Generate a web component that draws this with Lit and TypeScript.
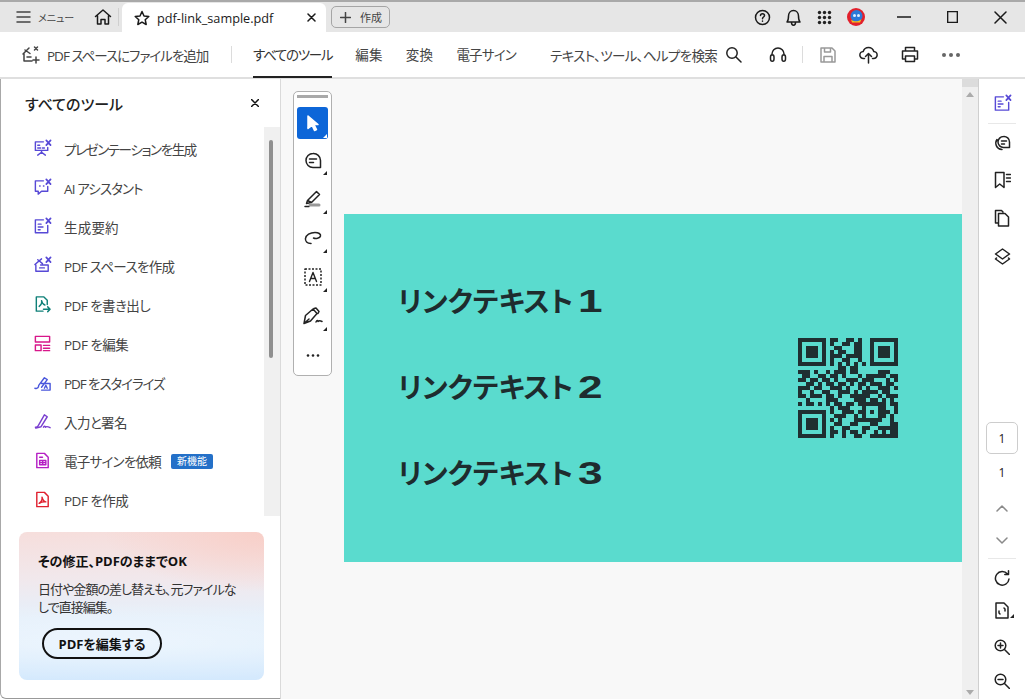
import { LitElement, html, svg, css } from 'lit';
import { customElement } from 'lit/decorators.js';

// QR modules, 25x25
const QR_ROWS = [
  '1111111 0 110011010 0 1111111',
  '1000001 0 100110110 0 1000001',
  '1011101 0 011000110 0 1011101',
  '1011101 0 101100110 0 1011101',
  '1011101 0 111011110 0 1011101',
  '1000001 0 100110010 0 1000001',
  '1111111 0 101010101 0 1111111',
  '0000000 0 001101100 0 0000000',
  '1110100 1 011101100 0 0011100',
  '0110011 0 110100010 1 1111011',
  '1101101 1 010011101 1 1000101',
  '0011010 1 101101011 0 1110110',
  '1110110 0 111010010 1 0011101',
  '1001001 1 001110101 1 1101100',
  '1101110 1 101001111 1 0010111',
  '0010000 1 110000111 0 1101010',
  '1011010 1 011011011 1 1111011',
  '0000000 0 101110001 0 0011001',
  '1111111 0 100111011 0 1011101',
  '1000001 0 011100101 0 0011010',
  '1011101 0 101000111 1 1110010',
  '1011101 0 011001100 0 1100011',
  '1011101 0 100110001 1 0011111',
  '1000001 0 110101101 0 0101011',
  '1111111 0 100100110 0 1111111',
].map((r) => r.replace(/ /g, ''));

const qrPath = QR_ROWS.map((row, y) =>
  [...row].map((c, x) => (c === '1' ? `M${x} ${y}h1v1h-1z` : '')).join('')
).join('');

const sparkle = svg`<path d="M14 1.500l4.500 5M18.500 1.500l-4.500 5" stroke-width="1.800"/>`;

// ls: カナが詰まった書体に幅を合わせるための字間
const tools = [
  { label: 'プレゼンテーションを生成', ls: -1.4, color: '#5749d6', icon: svg`<path d="M11 3H2.500v9h13V9M9 12v2M5 17l4-3 4 3M5 6.500h2M5 9.500h3M10 9.500h2"/>${sparkle}` },
  { label: 'AI アシスタント', ls: -0.9, color: '#5749d6', icon: svg`<path d="M11 3H2.500v11h3v3l3.500-3h6.500V9M7 8.500h.5M11 8.500h.5"/>${sparkle}` },
  { label: '生成要約', ls: 0.2, color: '#5749d6', icon: svg`<path d="M11 3H2.500v13.500h13V9M5.500 7.500h3M5.500 10.500h5M5.500 13.500h2"/>${sparkle}` },
  { label: 'PDF スペースを作成', ls: -0.65, color: '#5749d6', icon: svg`<path d="M2 9l7-6M5 4l5 4M3 9.500V16h13V9.500H8M7 12.500h5"/>${sparkle}` },
  { label: 'PDF を書き出し', ls: -0.55, color: '#0f8078', icon: svg`<path d="M15 10V5.500L11.500 2H3.500v15h7M6.500 12c2-1.500 3-4 2.500-6 .5 2.500 2 4 3.500 4.500M11 15h7M15.500 12.500L18 15l-2.500 2.500"/>` },
  { label: 'PDF を編集', ls: -0.5, color: '#d8178a', icon: svg`<path d="M2.500 2.500h15v6h-15zM2.500 11.500h6v6h-6zM11 12h6.500M11 15h6.500M11 17.500h6.500"/>` },
  { label: 'PDF をスタイライズ', ls: -1.1, color: '#4a57dc', icon: svg`<path d="M2 16c3 1 4-1 4-3l6-8 3 2-6 8M9 11h9v7H9M12 16l1.500-3 1.500 3"/>` },
  { label: '入力と署名', ls: -0.6, color: '#7a3fd0', icon: svg`<path d="M2.500 16c2 .5 3-1 3.500-2.500L12 3l3 2-6.500 10.500L3 17M11 16c1-1.500 2-1.500 2 0 1-1 2-1 5 .5"/>` },
  { label: '電子サインを依頼', ls: -0.75, color: '#b51fc4', badge: '新機能', icon: svg`<path d="M4 2.500h8l4 4V17.500H4zM7 6.500h3M7 10h6.500v4.500H7zM10.200 10v4.500M7 12.200h6.500"/>` },
  { label: 'PDF を作成', ls: -0.5, color: '#e0202f', icon: svg`<path d="M4 2.500h8l4 4V17.500H4zM6.500 14c2-1.500 3.500-4 3-6.500.5 2.500 2 4.500 4 5-2-.2-4.500 0-7 1.500z"/>` },
];

const links = ['1', '2', '3'];

@customElement('app-root')
export class AppRoot extends LitElement {
  static styles = css`
    :host {
      display: block;
      width: 1025px;
      height: 699px;
      overflow: hidden;
      position: relative;
      background: #fff;
      color: #333;
      font-family: 'Open Sans', 'Noto Sans CJK JP', sans-serif;
      font-feature-settings: 'palt';
    }
    svg {
      display: block;
      flex: none;
      fill: none;
      stroke: currentColor;
      stroke-width: 1.5;
      stroke-linecap: round;
      stroke-linejoin: round;
    }

    /* タブバー */
    .tabbar {
      height: 32px;
      box-sizing: border-box;
      border-top: 2px solid #a9a9a9;
      background: #e6e6e6;
      display: flex;
      align-items: center;
      color: #1a1a1a;
    }
    .menu {
      display: flex;
      align-items: center;
      gap: 7px;
      padding-left: 16px;
      width: 78px;
      font-size: 10px;
      color: #444;
    }
    .home {
      margin-right: 6px;
    }
    .tabsep {
      width: 1px;
      height: 18px;
      background: #cfcfcf;
      margin-right: 3px;
    }
    .tab {
      align-self: flex-end;
      width: 204px;
      height: 29px;
      box-sizing: border-box;
      background: #fff;
      border-radius: 6px 6px 0 0;
      display: flex;
      align-items: center;
      padding: 0 10px 0 12px;
      font-size: 12.7px;
    }
    .tab span {
      margin-left: 7px;
      flex: 1;
    }
    .create {
      margin-left: 5px;
      width: 59px;
      height: 22px;
      box-sizing: border-box;
      border: 1px solid #a5a5a5;
      border-radius: 5px;
      display: flex;
      align-items: center;
      gap: 9px;
      padding-left: 8px;
      font-size: 11px;
      color: #444;
    }
    .tab-right {
      margin-left: auto;
      padding-right: 1px;
      display: flex;
      align-items: center;
    }
    .tab-right .u {
      width: 31px;
      display: flex;
      justify-content: center;
    }
    .tab-right .w {
      width: 48px;
      display: flex;
      justify-content: center;
    }
    .tab-right .gap {
      width: 9px;
    }

    /* ツールバー */
    .toolbar {
      height: 47px;
      box-sizing: border-box;
      border-bottom: 2px solid #dfdfdf;
      display: flex;
      align-items: stretch;
      font-size: 13.5px;
      color: #444;
      white-space: nowrap;
    }
    .add {
      display: flex;
      align-items: center;
      gap: 7px;
      padding-left: 21px;
      width: 231px;
      box-sizing: border-box;
      color: #444;
      letter-spacing: -1px;
    }
    .vsep {
      align-self: center;
      width: 1px;
      height: 17px;
      background: #dcdcdc;
      flex: none;
    }
    .tabs {
      display: flex;
      gap: 23px;
      margin-left: 21px;
    }
    .tabs div {
      display: flex;
      align-items: center;
      border-bottom: 2px solid transparent;
      margin-bottom: -1px;
      letter-spacing: 0.3px;
    }
    .tabs .on {
      border-bottom-color: #222;
      color: #333;
      letter-spacing: -1.3px;
    }
    .tabs .sign {
      letter-spacing: -0.8px;
    }
    .search {
      margin-left: 34px;
      display: flex;
      align-items: center;
      gap: 8px;
      color: #444;
      letter-spacing: -0.65px;
    }
    .actions {
      display: flex;
      align-items: center;
      color: #222;
      margin-left: 15px;
    }
    .actions .a {
      width: 41px;
      display: flex;
      justify-content: center;
    }
    .actions .vsep {
      margin: 0 4px;
    }
    .actions .off {
      color: #999;
    }

    /* 本体 */
    .body {
      display: flex;
      height: 620px;
    }
    .panel {
      width: 281px;
      box-sizing: border-box;
      border-left: 1px solid #a8a8a8;
      border-right: 1px solid #dadada;
      border-bottom: 1px solid #999;
      border-bottom-left-radius: 6px;
      display: flex;
      flex-direction: column;
      background: #fff;
    }
    .panel-head {
      height: 48px;
      flex: none;
      display: flex;
      align-items: center;
      justify-content: space-between;
      padding: 0 21px 0 24px;
      font-size: 15px;
      font-weight: 500;
      color: #222;
    }
    .list-wrap {
      height: 389px;
      flex: none;
      display: flex;
    }
    .list {
      flex: 1;
      padding-top: 3px;
    }
    .tool {
      height: 39px;
      display: flex;
      align-items: center;
      padding-left: 32px;
      font-size: 13.5px;
      color: #444;
    }
    .tool svg {
      margin-right: 12px;
      margin-top: -3px;
    }
    .tool .name {
      margin-top: -1px;
    }
    .badge {
      margin-left: 10px;
      background: #2470c8;
      color: #fff;
      font-size: 10px;
      line-height: 15px;
      padding: 0 6px;
      border-radius: 2px;
    }
    .track {
      width: 16px;
      background: #f0f0f0;
      padding: 13px 0 0 5px;
      box-sizing: border-box;
    }
    .thumb {
      width: 4px;
      height: 218px;
      border-radius: 2px;
      background: #8f8f8f;
    }
    .promo {
      margin: 16px 0 0 18px;
      width: 245px;
      height: 148px;
      box-sizing: border-box;
      border-radius: 8px;
      padding: 19px 0 0 19px;
      background: radial-gradient(ellipse 300px 40px at 40% 74%, rgba(255, 255, 255, 0.35) 0, rgba(255, 255, 255, 0) 100%),
        radial-gradient(ellipse 160px 60px at 100% 0, #f8cfc8 0, rgba(248, 207, 200, 0) 100%),
        linear-gradient(180deg, #f6dedc 0, #f1e8ec 32%, #e5f0fb 58%, #e2f0fd 78%, #d4e9fd 100%);
      color: #333;
    }
    .promo h3 {
      margin: 0;
      font-size: 13px;
      line-height: 20px;
      font-weight: 700;
      color: #111;
    }
    .promo p {
      margin: 9px 0 0;
      font-size: 13px;
      line-height: 18px;
      letter-spacing: -0.95px;
      white-space: nowrap;
    }
    .promo button {
      margin: 12px 0 0 4px;
      width: 120px;
      height: 31px;
      box-sizing: border-box;
      border: 2px solid #111;
      border-radius: 16px;
      background: transparent;
      font: inherit;
      font-feature-settings: inherit;
      font-size: 13px;
      font-weight: 700;
      color: #111;
      padding: 0;
    }

    .viewer {
      flex: 1;
      position: relative;
      background: #f8f8f8;
      padding: 135px 0 0 63px;
      box-sizing: border-box;
    }
    .sheet {
      width: 618px;
      height: 348px;
      box-sizing: border-box;
      background: #5adbce;
      color: #1e2c2e;
      padding: 67px 64px 0 54px;
      display: flex;
      justify-content: space-between;
    }
    .links {
      display: flex;
      flex-direction: column;
      gap: 45px;
      font-size: 28px;
      line-height: 41px;
      font-weight: 700;
      white-space: nowrap;
    }
    .digit {
      display: inline-block;
      margin-left: 5px;
      font-family: 'Liberation Sans', sans-serif;
      font-size: 32px;
      line-height: 41px;
      vertical-align: top;
      transform: scaleX(1.38);
      transform-origin: 0 50%;
    }
    .qr {
      margin-top: 57px;
      width: 100px;
      height: 100px;
      fill: #1f2f31;
      stroke: none;
    }
    .vbar {
      width: 16px;
      flex: none;
      background: #efefef;
      position: relative;
    }
    .vbar .top {
      height: 8px;
      background: #dcdcdc;
    }
    .arrow {
      width: 0;
      height: 0;
      margin: 5px auto 0;
      border: 4px solid transparent;
      border-top: 0;
      border-bottom: 5px solid #ababab;
    }
    .arrow.down {
      position: absolute;
      left: 4px;
      bottom: 4px;
      margin: 0;
      border-bottom: 0;
      border-top: 5px solid #ababab;
    }
    .palette {
      position: absolute;
      left: 12px;
      top: 12px;
      width: 39px;
      height: 285px;
      box-sizing: border-box;
      background: #fff;
      border: 1px solid #b0b0b0;
      border-radius: 5px;
      padding: 3px;
      display: flex;
      flex-direction: column;
      align-items: center;
      color: #222;
    }
    .grip {
      width: 31px;
      height: 3px;
      background: #a9a9a9;
      flex: none;
      margin-bottom: 9px;
    }
    .pbtn {
      width: 31px;
      height: 32px;
      flex: none;
      position: relative;
      display: flex;
      align-items: center;
      justify-content: center;
      margin-bottom: 7px;
    }
    .pbtn.on {
      background: #0d66d8;
      border-radius: 3px;
      color: #fff;
      margin-bottom: 5px;
    }
    .pbtn::after {
      content: '';
      position: absolute;
      right: 1px;
      bottom: 1px;
      border: 2.5px solid transparent;
      border-right-color: currentColor;
      border-bottom-color: currentColor;
    }
    .pbtn.plain::after {
      display: none;
    }

    .rail {
      flex: 1;
      border-left: 1px solid #cfcfcf;
      display: flex;
      flex-direction: column;
      align-items: center;
      padding-top: 14px;
      color: #222;
    }
    .rail .r {
      height: 38px;
      display: flex;
      align-items: center;
      flex: none;
      position: relative;
    }
    .rail .ai {
      height: 20px;
      color: #5749d6;
      margin-bottom: 8px;
    }
    .rail .first {
      height: 36px;
    }
    .rail .rot {
      height: 36px;
    }
    .rail .fit {
      height: 28px;
    }
    .rail .zin {
      height: 46px;
    }
    .rail .zout {
      height: 22px;
    }
    .hsep {
      width: 28px;
      height: 1px;
      background: #e8e8e8;
      flex: none;
      margin: 2px 0 1px;
    }
    .pagebox {
      margin-top: 147px;
      width: 32px;
      height: 32px;
      box-sizing: border-box;
      border: 1px solid #cdcdcd;
      border-radius: 5px;
      display: flex;
      align-items: center;
      justify-content: center;
      font-size: 12px;
      flex: none;
    }
    .pagenum {
      font-size: 12px;
      height: 38px;
      line-height: 38px;
      flex: none;
    }
    .chev {
      height: 32px;
      display: flex;
      align-items: center;
      color: #8a8a8a;
      flex: none;
    }
    .corner::after {
      content: '';
      position: absolute;
      right: -5px;
      bottom: 6px;
      border: 2.5px solid transparent;
      border-right-color: currentColor;
      border-bottom-color: currentColor;
    }
  `;

  private renderTabBar() {
    return html`
      <div class="tabbar">
        <div class="menu">
          <svg width="15" height="14" viewBox="0 0 15 14"><path d="M1 2h13M1 7h13M1 12h13"/></svg>
          <span>メニュー</span>
        </div>
        <svg class="home" width="18" height="18" viewBox="0 0 18 18"><path d="M1.500 8.500L9 2l7.500 6.500M3.500 7.500V16h3.500v-4.500h4V16h3.500V7.500"/></svg>
        <div class="tabsep"></div>
        <div class="tab">
          <svg width="16" height="16" viewBox="0 0 16 16" stroke-width="1.200"><path d="M8 1.500l2 4.500 4.800.5-3.600 3.200 1 4.800L8 12.100l-4.200 2.400 1-4.800L1.200 6.500 6 6z"/></svg>
          <span>pdf-link_sample.pdf</span>
          <svg width="9" height="9" viewBox="0 0 9 9"><path d="M1 1l7 7M8 1l-7 7"/></svg>
        </div>
        <div class="create">
          <svg width="11" height="11" viewBox="0 0 11 11"><path d="M5.500 .5v10M.5 5.500h10"/></svg>
          <span>作成</span>
        </div>
        <div class="tab-right">
          <div class="u"><svg width="17" height="17" viewBox="0 0 17 17" stroke-width="1.300"><circle cx="8.500" cy="8.500" r="7"/><path d="M6.500 6.500c0-2.500 4-2.500 4 0 0 1.500-2 1.500-2 3.200M8.500 12v.3"/></svg></div>
          <div class="u"><svg width="17" height="19" viewBox="0 0 17 19" stroke-width="1.300"><path d="M2 14c1.500-1.500 1.500-3 1.500-6 0-3 2-5.500 5-5.500s5 2.500 5 5.500c0 3 0 4.500 1.500 6zM6.500 14.500c0 3.500 4 3.500 4 0"/></svg></div>
          <div class="u"><svg width="15" height="15" viewBox="0 0 15 15" fill="#222" stroke="none"><circle cx="2.500" cy="2.500" r="1.700" fill="#222" stroke="none"/><circle cx="7.500" cy="2.500" r="1.700" fill="#222" stroke="none"/><circle cx="12.500" cy="2.500" r="1.700" fill="#222" stroke="none"/><circle cx="2.500" cy="7.500" r="1.700" fill="#222" stroke="none"/><circle cx="7.500" cy="7.500" r="1.700" fill="#222" stroke="none"/><circle cx="12.500" cy="7.500" r="1.700" fill="#222" stroke="none"/><circle cx="2.500" cy="12.500" r="1.700" fill="#222" stroke="none"/><circle cx="7.500" cy="12.500" r="1.700" fill="#222" stroke="none"/><circle cx="12.500" cy="12.500" r="1.700" fill="#222" stroke="none"/></svg></div>
          <div class="u"><svg width="18" height="18" viewBox="0 0 18 18"><circle cx="9" cy="9" r="9" fill="#e2202c" stroke="none"/><circle cx="9.500" cy="8" r="6" fill="#2b79d8" stroke="none"/><path d="M4 11.500c2 2.500 8 2.500 10.500-.5l-1.500 3.500H5z" fill="#f2c21b" stroke="none"/><circle cx="7.500" cy="7.500" r="1.500" fill="#dfeeff" stroke="none"/><circle cx="11.500" cy="7.500" r="1.500" fill="#dfeeff" stroke="none"/></svg></div>
          <div class="gap"></div>
          <div class="w"><svg width="14" height="2" viewBox="0 0 14 2"><path d="M0 1h14"/></svg></div>
          <div class="w"><svg width="11" height="12" viewBox="0 0 11 12" stroke-width="1.200"><path d="M.6.6h9.800v10.800H.6z"/></svg></div>
          <div class="w"><svg width="13" height="13" viewBox="0 0 13 13" stroke-width="1.200"><path d="M1 1l11 11M12 1L1 12"/></svg></div>
        </div>
      </div>
    `;
  }

  private renderToolBar() {
    return html`
      <div class="toolbar">
        <div class="add">
          <svg width="19" height="19" viewBox="0 0 19 19" stroke-width="1.300"><path d="M2 9l6-6M4 5l5 3.500M3 9v7h8M6 12h4M15 12v6M12 15h6"/><path d="M13.500 2l3 3M16.500 2l-3 3"/></svg>
          <span>PDF スペースにファイルを追加</span>
        </div>
        <div class="vsep"></div>
        <div class="tabs">
          <div class="on">すべてのツール</div>
          <div>編集</div>
          <div>変換</div>
          <div class="sign">電子サイン</div>
        </div>
        <div class="search">
          <span>テキスト、ツール、ヘルプを検索</span>
          <svg width="17" height="17" viewBox="0 0 17 17" color="#222"><circle cx="7" cy="7" r="5.200"/><path d="M11 11l5 5"/></svg>
        </div>
        <div class="actions">
          <div class="a"><svg width="18" height="17" viewBox="0 0 18 17"><path d="M3 9V8a6 6 0 0 1 12 0v1M1.500 11c0-3 3.500-3 3.500 0v2c0 3-3.500 3-3.500 0zM13 11c0-3 3.500-3 3.500 0v2c0 3-3.500 3-3.500 0z"/></svg></div>
          <div class="vsep"></div>
          <div class="a off"><svg width="16" height="16" viewBox="0 0 16 16" stroke-width="1.300"><path d="M1 1h11l3 3v11H1zM4.500 1v4h6V1M4 15V9.500h8V15"/></svg></div>
          <div class="a"><svg width="19" height="18" viewBox="0 0 19 18"><path d="M5.500 12.500H4.500a3.500 3.500 0 0 1-.3-7C5 3 7 1.500 9.500 1.500S14 3 14.800 5.500a3.500 3.500 0 0 1-.3 7h-1M9.500 17V8M6.500 10.500l3-3 3 3"/></svg></div>
          <div class="a"><svg width="18" height="17" viewBox="0 0 18 17"><path d="M4.500 5V1.500h9V5M4 13H1.500V5h15v8H14M4.500 10h9v5.500h-9z"/></svg></div>
          <div class="a"><svg width="18" height="4" viewBox="0 0 18 4"><circle cx="2" cy="2" r="2" fill="#666" stroke="none"/><circle cx="9" cy="2" r="2" fill="#666" stroke="none"/><circle cx="16" cy="2" r="2" fill="#666" stroke="none"/></svg></div>
        </div>
      </div>
    `;
  }

  private renderPanel() {
    return html`
      <div class="panel">
        <div class="panel-head">
          <span>すべてのツール</span>
          <svg width="8" height="8" viewBox="0 0 8 8" color="#111"><path d="M.5.5l7 7M7.500.5l-7 7"/></svg>
        </div>
        <div class="list-wrap">
          <div class="list">
            ${tools.map(
              (t) => html`
                <div class="tool">
                  <svg width="19" height="19" viewBox="0 0 20 20" stroke-width="1.700" style="color:${t.color}">${t.icon}</svg>
                  <span class="name" style="letter-spacing:${t.ls}px">${t.label}</span>
                  ${t.badge ? html`<span class="badge">${t.badge}</span>` : ''}
                </div>
              `
            )}
          </div>
          <div class="track"><div class="thumb"></div></div>
        </div>
        <div class="promo">
          <h3>その修正、PDFのままでOK</h3>
          <p>日付や金額の差し替えも、元ファイルな<br />しで直接編集。</p>
          <button>PDFを編集する</button>
        </div>
      </div>
    `;
  }

  private renderViewer() {
    return html`
      <div class="viewer">
        <div class="sheet">
          <div class="links">
            ${links.map((n) => html`<div>リンクテキスト<span class="digit">${n}</span></div>`)}
          </div>
          <svg class="qr" viewBox="0 0 25 25" shape-rendering="crispEdges"><path d=${qrPath}></path></svg>
        </div>
        <div class="palette">
          <div class="grip"></div>
          <div class="pbtn on"><svg width="14" height="17" viewBox="0 0 14 17" fill="#fff" stroke-width="1"><path fill="#fff" d="M2 1l10 8.500H8l2.500 5-2 1-2.500-5.200L2 13.500z"/></svg></div>
          <div class="pbtn"><svg width="18" height="17" viewBox="0 0 18 17"><path d="M9 1.500a7 7 0 1 0 0 14h7.500V8.500A7 7 0 0 0 9 1.500zM5.500 7h7M5.500 10.500h4"/></svg></div>
          <div class="pbtn"><svg width="20" height="18" viewBox="0 0 20 18"><path d="M13.500 1.500l3 3-8 8-4-2zM4.500 10.500l-1 3 5-1M2 16.500h4"/><path d="M7 15h9" stroke="#999" stroke-width="3"/></svg></div>
          <div class="pbtn"><svg width="18" height="14" viewBox="0 0 18 14"><path d="M7 12.500C3 12.500 1 10 1.500 7.500 2 4 6 1.500 11 1.500c3.500 0 6 1.500 5.500 3.500-.5 2.500-5 3-7 2"/></svg></div>
          <div class="pbtn"><svg width="18" height="18" viewBox="0 0 18 18"><path d="M1 1h16v16H1z" stroke-dasharray="2 1.500" stroke-linecap="butt"/><path d="M5.500 13.500L9 4.500l3.500 9M6.800 10.500h4.400" stroke-width="1.400"/></svg></div>
          <div class="pbtn"><svg width="20" height="18" viewBox="0 0 20 18"><path d="M1 16.500l1.500-8L10 2l4 4.500-6.500 7.500zM1 16.500l5-4.500M11 1.500l2-.5 3 3.500-1 2M13 15c1-2 2-2 2-.5 1-1 2-1 4 0"/></svg></div>
          <div class="pbtn plain"><svg width="14" height="3" viewBox="0 0 14 3"><circle cx="2" cy="1.500" r="1.300" fill="#222" stroke="none"/><circle cx="7" cy="1.500" r="1.300" fill="#222" stroke="none"/><circle cx="12" cy="1.500" r="1.300" fill="#222" stroke="none"/></svg></div>
        </div>
      </div>
      <div class="vbar">
        <div class="top"></div>
        <div class="arrow"></div>
        <div class="arrow down"></div>
      </div>
    `;
  }

  private renderRail() {
    return html`
      <div class="rail">
        <div class="r ai"><svg width="19" height="19" viewBox="0 0 20 20" stroke-width="1.700"><path d="M11 3H2.500v14h14V9M5.500 7.500h3M5.500 10.500h5M5.500 13.500h2"/>${sparkle}</svg></div>
        <div class="hsep"></div>
        <div class="r first"><svg width="17" height="16" viewBox="0 0 17 16"><path d="M9.500 1.500a5.500 5.500 0 1 0 0 11h6V7a5.500 5.500 0 0 0-6-5.500zM7.500 6h5M7.500 9h3M3 4.500C.5 8 2 14 8 14.500"/></svg></div>
        <div class="r"><svg width="17" height="18" viewBox="0 0 17 18"><path d="M1.500 1.500h8.500v15L5.700 13l-4.200 3.500zM12.500 3.500h4M12.500 7h4M12.500 10.500h4"/></svg></div>
        <div class="r"><svg width="16" height="18" viewBox="0 0 16 18"><path d="M3.500 14H1.500V1.500h6L9 3M4.500 4.500h6.500l3.500 3.500v9h-10z"/></svg></div>
        <div class="r"><svg width="17" height="17" viewBox="0 0 17 17"><path d="M8.500 1L15.500 6l-7 5-7-5zM2.500 10l-1 1 7 5 7-5-1-1"/></svg></div>
        <div class="pagebox">1</div>
        <div class="pagenum">1</div>
        <div class="chev"><svg width="12" height="7" viewBox="0 0 12 7" stroke-width="1.700"><path d="M1 6l5-5 5 5"/></svg></div>
        <div class="chev"><svg width="12" height="7" viewBox="0 0 12 7" stroke-width="1.700"><path d="M1 1l5 5 5-5"/></svg></div>
        <div class="hsep"></div>
        <div class="r rot"><svg width="16" height="16" viewBox="0 0 16 16"><path d="M13.500 4A6.800 6.800 0 1 0 15 9M14.500 .8V4.500H10.800"/></svg></div>
        <div class="r fit corner"><svg width="14" height="17" viewBox="0 0 14 17"><path d="M1 1h8l4 4v11H1zM5 12l-1-1v-2M9 6l1 1v2"/></svg></div>
        <div class="r zin"><svg width="16" height="16" viewBox="0 0 16 16"><circle cx="6.500" cy="6.500" r="5.300"/><path d="M10.500 10.500l5 5M4 6.500h5M6.500 4v5"/></svg></div>
        <div class="r zout"><svg width="16" height="16" viewBox="0 0 16 16"><circle cx="6.500" cy="6.500" r="5.300"/><path d="M10.500 10.500l5 5M4 6.500h5"/></svg></div>
      </div>
    `;
  }

  render() {
    return html`
      ${this.renderTabBar()}
      ${this.renderToolBar()}
      <div class="body">
        ${this.renderPanel()}
        ${this.renderViewer()}
        ${this.renderRail()}
      </div>
    `;
  }
}
